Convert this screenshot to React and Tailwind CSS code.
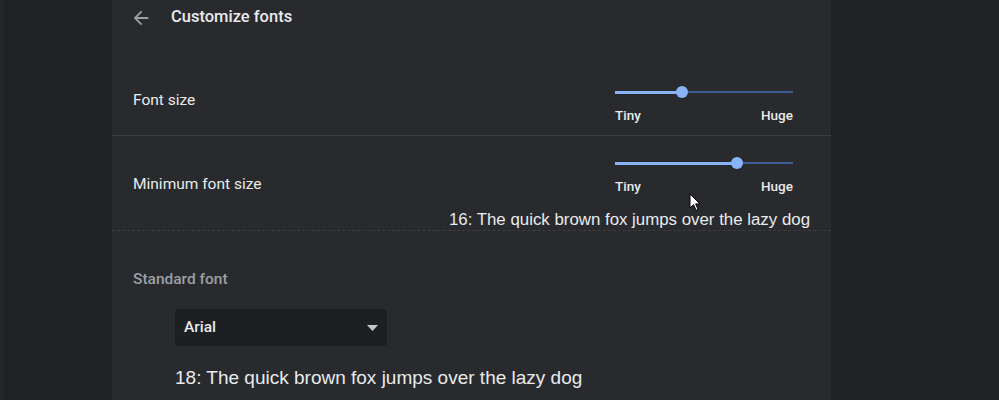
import React from "react";

function Slider({ pos }) {
  return (
    <div className="flex flex-col w-[178px]">
      <div className="relative h-[12px] w-full">
        <div className="absolute left-0 right-0 top-[5px] h-[2px] bg-[#3b5e94]" />
        <div className="absolute left-0 top-[5px] h-[3px] bg-[#8ab4f8]" style={{ width: pos }} />
        <div
          className="absolute top-0 h-[12px] w-[12px] rounded-full bg-[#8ab4f8]"
          style={{ left: pos - 6 }}
        />
      </div>
      <div className="mt-[8px] flex justify-between text-[13.5px] leading-[18px] font-medium text-[#e8eaed]">
        <span>Tiny</span>
        <span>Huge</span>
      </div>
    </div>
  );
}

export default function App() {
  return (
    <div
      className="relative flex h-[400px] w-[999px] overflow-hidden bg-[#202124] text-[#e8eaed]"
      style={{ fontFamily: "Roboto, 'Liberation Sans', sans-serif" }}
    >
      <div className="w-[4px] bg-[#242528]" />
      <div className="ml-[108px] flex w-[719px] flex-col bg-[#292a2d]">
        {/* header */}
        <div className="flex h-[34px] items-center pl-[18px] pt-[1px]">
          <svg width="22" height="22" viewBox="0 0 24 24" className="text-[#9aa0a6]">
            <path
              d="M20 11H7.83l5.59-5.59L12 4l-8 8 8 8 1.41-1.41L7.83 13H20v-2z"
              fill="currentColor"
            />
          </svg>
          <span className="ml-[19px] text-[16.5px] font-medium">Customize fonts</span>
        </div>

        {/* font size */}
        <div className="flex h-[102px] items-start justify-between border-b border-[#3c3d40] pl-[21px] pr-[38px]">
          <div className="pt-[55px] text-[15.5px] leading-[22px]">Font size</div>
          <div className="pt-[52px]">
            <Slider pos={67} />
          </div>
        </div>

        {/* min font size */}
        <div className="flex h-[95px] flex-col border-b border-dashed border-[#3c3d40] pl-[21px] pr-[21px]">
          <div className="flex items-start justify-between pr-[17px]">
            <div className="pt-[37px] text-[15.5px] leading-[22px]">Minimum font size</div>
            <div className="pt-[21px]">
              <Slider pos={122} />
            </div>
          </div>
          <div
            className="mt-[14px] text-right text-[16.85px] leading-[22px]"
            style={{ fontFamily: "'Liberation Sans', Arial, sans-serif" }}
          >
            16: The quick brown fox jumps over the lazy dog
          </div>
        </div>

        {/* standard font */}
        <div className="flex flex-col pl-[21px]">
          <div className="pt-[37px] text-[15.5px] font-medium leading-[22px] text-[#9aa0a6]">
            Standard font
          </div>
          <div className="ml-[42px] mt-[19px] flex h-[37px] w-[212px] items-center justify-between rounded-[4px] bg-[#1e1f22] pl-[9px] pr-[9px]">
            <span className="text-[15.5px] font-medium">Arial</span>
            <svg width="11" height="6" viewBox="0 0 11 6">
              <path d="M0 0h11L5.5 6z" fill="#c4c7cc" />
            </svg>
          </div>
          <div
            className="ml-[42px] mt-[19px] text-[19px] leading-[26px]"
            style={{ fontFamily: "'Liberation Sans', Arial, sans-serif" }}
          >
            18: The quick brown fox jumps over the lazy dog
          </div>
        </div>
      </div>

      {/* mouse cursor */}
      <svg
        className="absolute left-[689px] top-[193px]"
        width="12"
        height="18"
        viewBox="0 0 12 18"
      >
        <path d="M1 1v14l3.5-3.3 2.6 5.6 2-0.9-2.5-5.5H11z" fill="#fff" stroke="#000" strokeWidth="1" />
      </svg>
    </div>
  );
}
